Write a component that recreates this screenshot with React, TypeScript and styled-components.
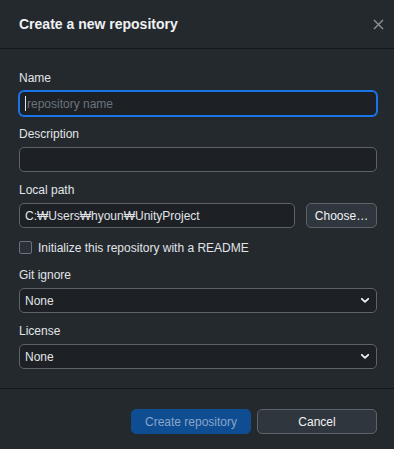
import React from 'react'
import styled, { createGlobalStyle } from 'styled-components'

const GlobalStyle = createGlobalStyle`
  html, body {
    margin: 0;
    padding: 0;
    background: #24292e;
  }
  body {
    font-family: "Liberation Sans", Arial, sans-serif;
    font-size: 12px;
    color: #e1e4e8;
  }
`

const Dialog = styled.div`
  width: 394px;
  height: 449px;
  background: #24292e;
  display: flex;
  flex-direction: column;
  box-sizing: border-box;
`

const Header = styled.header`
  height: 48px;
  border-bottom: 1px solid #141719;
  display: flex;
  align-items: center;
  justify-content: space-between;
  padding: 0 8px 0 19px;
  flex-shrink: 0;
`

const Title = styled.h1`
  margin: 0;
  font-size: 14px;
  font-weight: bold;
  color: #f0f2f4;
`

const CloseButton = styled.button`
  background: none;
  border: 0;
  padding: 0;
  width: 16px;
  height: 16px;
  display: flex;
  align-items: center;
  justify-content: center;
  cursor: pointer;
`

const Body = styled.div`
  flex: 1;
  padding: 21px 17px 0 19px;
  display: flex;
  flex-direction: column;
  gap: 10px;
`

const Field = styled.div`
  display: flex;
  flex-direction: column;
`

const Label = styled.label`
  line-height: 17px;
  margin-bottom: 4px;
  padding-top: 1px;
  margin-top: -1px;
  color: #e1e4e8;
`

const TextInput = styled.input`
  box-sizing: border-box;
  height: 25px;
  width: 100%;
  background: #1d2125;
  border: 1px solid #5b636b;
  border-radius: 5px;
  padding: 0 6px 0 5px;
  font-family: inherit;
  font-size: 12px;
  color: #e1e4e8;
  outline: none;
  &::placeholder {
    color: #6a737d;
  }
`

const Caret = styled.span`
  display: inline-block;
  width: 1px;
  height: 15px;
  background: #e1e4e8;
  margin-right: 1px;
`

const FocusWrap = styled.div`
  box-sizing: border-box;
  height: 25px;
  display: flex;
  align-items: center;
  background: #1d2125;
  border: 1px solid #1a73e8;
  box-shadow: 0 0 0 1px #1a73e8;
  border-radius: 5px;
  padding-left: 5px;
  input {
    border: 0;
    background: transparent;
    height: 21px;
    padding: 0;
  }
`

const PathRow = styled.div`
  display: flex;
  gap: 11px;
`

const Button = styled.button<{ primary?: boolean }>`
  box-sizing: border-box;
  height: 25px;
  border-radius: 5px;
  font-family: inherit;
  font-size: 12px;
  cursor: pointer;
  border: 1px solid ${({ primary }) => (primary ? '#0e4d92' : '#5b636b')};
  background: ${({ primary }) => (primary ? '#0e4d92' : '#2f363d')};
  color: ${({ primary }) => (primary ? '#8aa5c6' : '#f0f2f4')};
`

const ChooseButton = styled(Button)`
  width: 71px;
  flex-shrink: 0;
`

const CheckRow = styled.label`
  height: 19px;
  display: flex;
  align-items: center;
  gap: 6px;
`

const CheckBox = styled.span`
  box-sizing: border-box;
  width: 13px;
  height: 13px;
  border: 1px solid #6a737d;
  border-radius: 2px;
  background: #2b3137;
`

const Select = styled.div`
  box-sizing: border-box;
  height: 25px;
  background: #1d2125;
  border: 1px solid #5b636b;
  border-radius: 5px;
  padding: 0 6px 0 5px;
  display: flex;
  align-items: center;
  justify-content: space-between;
  color: #e1e4e8;
`

const Footer = styled.footer`
  border-top: 1px solid #141719;
  padding: 20px 17px 15px 19px;
  display: flex;
  justify-content: flex-end;
  gap: 6px;
  flex-shrink: 0;
`

const FooterButton = styled(Button)`
  width: 120px;
`

const Chevron = () => (
  <svg width="10" height="7" viewBox="0 0 10 7">
    <path d="M1.8 1.8 L5 4.8 L8.2 1.8" stroke="#f0f2f4" strokeWidth="1.8" fill="none" strokeLinecap="round" strokeLinejoin="round" />
  </svg>
)

const SelectField = ({ label, value }: { label: string; value: string }) => (
  <Field>
    <Label>{label}</Label>
    <Select>
      <span>{value}</span>
      <Chevron />
    </Select>
  </Field>
)

export default function App() {
  return (
    <>
      <GlobalStyle />
      <Dialog>
        <Header>
          <Title>Create a new repository</Title>
          <CloseButton aria-label="Close">
            <svg width="11" height="11" viewBox="0 0 11 11">
              <path d="M1 1 L10 10 M10 1 L1 10" stroke="#8b949e" strokeWidth="1.4" />
            </svg>
          </CloseButton>
        </Header>
        <Body>
          <Field>
            <Label>Name</Label>
            <FocusWrap>
              <Caret />
              <TextInput placeholder="repository name" />
            </FocusWrap>
          </Field>
          <Field>
            <Label>Description</Label>
            <TextInput />
          </Field>
          <Field>
            <Label>Local path</Label>
            <PathRow>
              <TextInput defaultValue="C:₩Users₩hyoun₩UnityProject" />
              <ChooseButton>Choose…</ChooseButton>
            </PathRow>
          </Field>
          <CheckRow>
            <CheckBox />
            <span>Initialize this repository with a README</span>
          </CheckRow>
          <SelectField label="Git ignore" value="None" />
          <SelectField label="License" value="None" />
        </Body>
        <Footer>
          <FooterButton primary>Create repository</FooterButton>
          <FooterButton>Cancel</FooterButton>
        </Footer>
      </Dialog>
    </>
  )
}
